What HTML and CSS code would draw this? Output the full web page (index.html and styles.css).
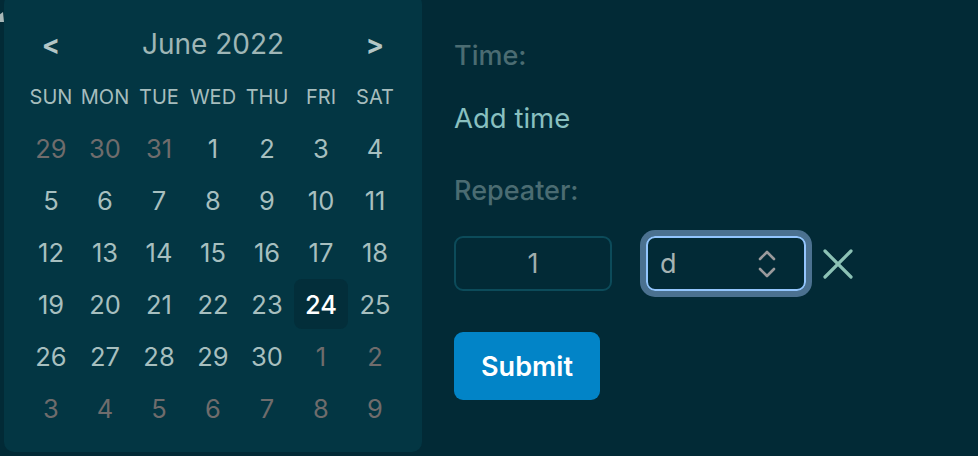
FILE: index.html
```html
<!DOCTYPE html>
<html lang="en">
<head>
<meta charset="utf-8">
<title>Date picker</title>
<link rel="stylesheet" href="styles.css">
</head>
<body>
<div class="page">
  <svg class="pointer" width="6" height="12" viewBox="0 0 6 12"><polygon points="0,3 4,0 5,10 0,10" fill="#a8b8b8"/></svg>
  <div class="calendar">
    <div class="cal-head">
      <span class="nav">&lt;</span>
      <span class="month">June 2022</span>
      <span class="nav">&gt;</span>
    </div>
    <div class="grid">
      <span class="wd">SUN</span><span class="wd">MON</span><span class="wd">TUE</span><span class="wd">WED</span><span class="wd">THU</span><span class="wd">FRI</span><span class="wd">SAT</span>
      <span class="d out">29</span><span class="d out">30</span><span class="d out">31</span><span class="d">1</span><span class="d">2</span><span class="d">3</span><span class="d">4</span>
      <span class="d">5</span><span class="d">6</span><span class="d">7</span><span class="d">8</span><span class="d">9</span><span class="d">10</span><span class="d">11</span>
      <span class="d">12</span><span class="d">13</span><span class="d">14</span><span class="d">15</span><span class="d">16</span><span class="d">17</span><span class="d">18</span>
      <span class="d">19</span><span class="d">20</span><span class="d">21</span><span class="d">22</span><span class="d">23</span><span class="d sel">24</span><span class="d">25</span>
      <span class="d">26</span><span class="d">27</span><span class="d">28</span><span class="d">29</span><span class="d">30</span><span class="d out">1</span><span class="d out">2</span>
      <span class="d out">3</span><span class="d out">4</span><span class="d out">5</span><span class="d out">6</span><span class="d out">7</span><span class="d out">8</span><span class="d out">9</span>
    </div>
  </div>
  <form class="form">
    <div class="label">Time:</div>
    <div class="add">Add time</div>
    <div class="label rep">Repeater:</div>
    <div class="row">
      <div class="num">1</div>
      <div class="select">
        <span>d</span>
        <svg class="chev" width="20" height="32" viewBox="0 0 20 32"><path d="M3 11 L10 4 L17 11 M3 21 L10 28 L17 21" fill="none" stroke="#9a9a9c" stroke-width="2.6" stroke-linecap="round" stroke-linejoin="round"/></svg>
      </div>
      <svg class="close" width="30" height="30" viewBox="0 0 30 30"><path d="M2 2 L28 28 M28 2 L2 28" stroke="#8cc2b5" stroke-width="3.2" stroke-linecap="round"/></svg>
    </div>
    <button type="button" class="submit">Submit</button>
  </form>
</div>
</body>
</html>
```
FILE: styles.css
```css
* { box-sizing: border-box; }
html, body { margin: 0; padding: 0; }
body {
  background: #022a36;
  font-family: Inter, "Noto Sans", sans-serif;
  width: 978px;
  height: 456px;
  overflow: hidden;
}
.page {
  position: relative;
  display: flex;
  align-items: flex-start;
}
.pointer {
  position: absolute;
  left: -1px;
  top: 12px;
}
.calendar {
  margin-left: 4px;
  margin-top: -6px;
  width: 418px;
  height: 458px;
  background: #033643;
  border-radius: 10px;
  padding: 24px 20px 0;
}
.cal-head {
  display: flex;
  align-items: center;
  height: 52px;
}
.nav {
  width: 54px;
  text-align: center;
  font-size: 27px;
  font-weight: 700;
  color: #b3c6c6;
}
.month {
  flex: 1;
  text-align: center;
  font-size: 28px;
  color: #9fb6b6;
}
.grid {
  display: grid;
  grid-template-columns: repeat(7, 54px);
  grid-auto-rows: 52px;
}
.wd {
  display: flex;
  align-items: center;
  justify-content: center;
  font-size: 20px;
  color: #a6bdbd;
  padding-top: 2px;
}
.d {
  display: flex;
  align-items: center;
  justify-content: center;
  font-size: 25.5px;
  color: #a7bfbf;
  margin: 1px 0 1px 0;
  border-radius: 8px;
}
.d.out { color: #6f6c6c; }
.d.sel {
  background: #032e3a;
  color: #ffffff;
  font-weight: 500;
}
.form {
  margin-left: 32px;
  padding-top: 36px;
  display: flex;
  flex-direction: column;
  align-items: flex-start;
}
.label {
  font-size: 27px;
  font-weight: 500;
  line-height: 40px;
  color: #4b6c72;
}
.add {
  margin-top: 22px;
  font-size: 27.5px;
  line-height: 40px;
  color: #89c0c0;
}
.rep { margin-top: 33px; }
.row {
  margin-top: 25px;
  display: flex;
  align-items: center;
}
.num {
  width: 158px;
  height: 55px;
  border: 2px solid #0c4b5a;
  border-radius: 9px;
  display: flex;
  align-items: center;
  justify-content: center;
  font-size: 27px;
  color: #9fadad;
}
.select {
  margin-left: 34px;
  width: 160px;
  height: 55px;
  border: 2px solid #93c5fd;
  border-radius: 9px;
  box-shadow: 0 0 0 6px #4b7190;
  display: flex;
  align-items: center;
  justify-content: space-between;
  padding: 0 27px 0 12px;
  font-size: 27px;
  color: #a5b3b3;
}
.chev { display: block; }
.close {
  margin-left: 17px;
  display: block;
}
.submit {
  margin-top: 41px;
  width: 146px;
  height: 68px;
  border: none;
  border-radius: 9px;
  background: #0284c7;
  color: #ffffff;
  font-family: Inter, "Noto Sans", sans-serif;
  font-size: 27px;
  font-weight: 600;
  padding: 0;
}
```
